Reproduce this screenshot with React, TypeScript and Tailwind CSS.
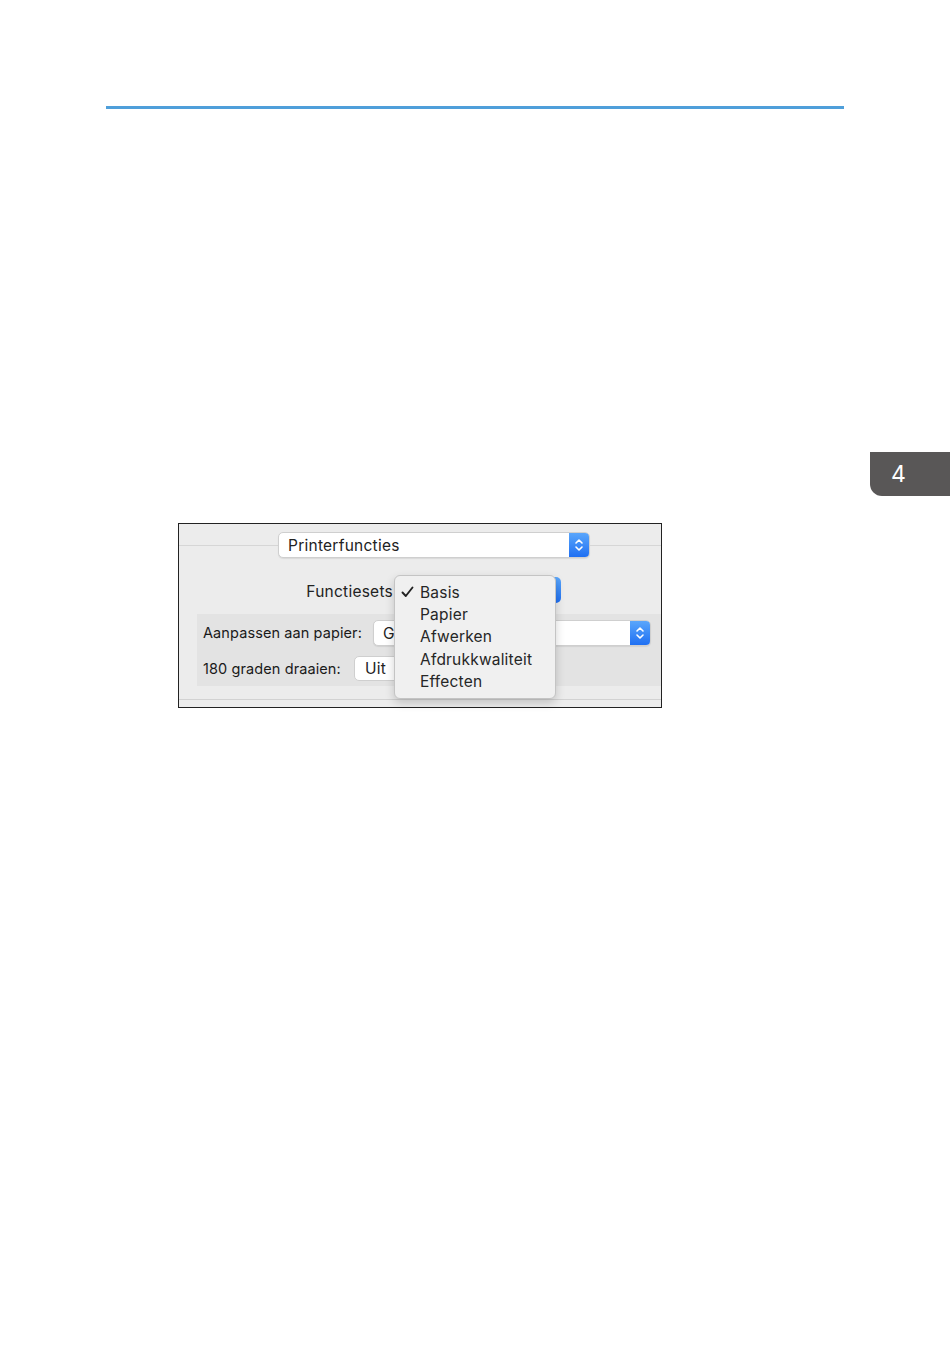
import React from 'react';

const font = { fontFamily: 'Inter, "Noto Sans", "Liberation Sans", sans-serif' };

function Stepper() {
  return (
    <span className="flex h-full w-[20px] items-center justify-center rounded-r-[4px] bg-gradient-to-b from-[#5aa6fb] to-[#1f6ff2]">
      <svg width="10" height="16" viewBox="0 0 10 16" fill="none" stroke="#fff" strokeWidth="1.6" strokeLinecap="round" strokeLinejoin="round">
        <path d="M2 6 L5 3 L8 6" />
        <path d="M2 10 L5 13 L8 10" />
      </svg>
    </span>
  );
}

function PopUp({ label, width }: { label: string; width: string }) {
  return (
    <div className={`flex h-[26px] ${width} items-stretch rounded-[5px] border border-[#cfcfcf] bg-white shadow-[0_1px_1px_rgba(0,0,0,0.08)]`}>
      <span className="flex flex-1 items-center pl-[9px] pt-[2px] text-[15.5px] tracking-[0.25px] text-[#222]">{label}</span>
      <Stepper />
    </div>
  );
}

const items = ['Basis', 'Papier', 'Afwerken', 'Afdrukkwaliteit', 'Effecten'];

export default function App() {
  return (
    <div className="relative h-[1348px] w-[950px] overflow-hidden bg-white" style={font}>
      {/* header rule */}
      <div className="pt-[106px]">
        <div className="ml-[106px] h-[3px] w-[738px] bg-[#4f9fda]" />
      </div>

      {/* chapter tab */}
      <div className="absolute right-0 top-[452px] flex h-[44px] w-[80px] items-center rounded-bl-[12px] bg-[#595757] pl-[21px] text-[23px] text-white">
        4
      </div>

      {/* dialog screenshot */}
      <div className="ml-[178px] mt-[414px] h-[185px] w-[484px] border border-[#222] bg-[#ececec]">
        <div className="relative h-full w-full">
          {/* row 1 */}
          <div className="flex items-center pt-[8px]">
            <div className="h-px w-[99px] bg-[#d6d6d6]" />
            <PopUp label="Printerfuncties" width="w-[312px]" />
            <div className="h-px flex-1 bg-[#d6d6d6]" />
          </div>

          {/* row 2 */}
          <div className="mt-[19px] flex h-[26px] items-center">
            <span className="w-[214px] pt-[4px] text-right text-[15.5px] tracking-[0.25px] text-[#222]">Functiesets</span>
            <div className="ml-[5px] h-[26px] w-[163px] rounded-[5px] bg-gradient-to-b from-[#5aa6fb] to-[#1f6ff2]" />
          </div>

          {/* grey panel */}
          <div className="ml-[18px] mt-[11px] flex h-[72px] flex-col gap-[10px] bg-[#e3e3e3] pl-[6px] pt-[6px]">
            <div className="flex items-center">
              <span className="w-[170px] text-[14.5px] tracking-[0.1px] text-[#1a1a1a]">Aanpassen aan papier:</span>
              <PopUp label="G" width="w-[278px]" />
            </div>
            <div className="flex items-center">
              <span className="w-[151px] text-[14.5px] tracking-[0.1px] text-[#1a1a1a]">180 graden draaien:</span>
              <div className="flex h-[25px] w-[60px] items-center rounded-[5px] border border-[#cfcfcf] bg-white pl-[10px] text-[15.5px] tracking-[0.25px] text-[#222]">
                Uit
              </div>
            </div>
          </div>

          <div className="mt-[13px] h-px w-full bg-[#d2d2d2]" />

          {/* open menu */}
          <div className="absolute left-[215px] top-[51px] w-[162px] rounded-[6px] border border-[#c4c4c4] bg-[#f0f0f0] py-[5px] shadow-[0_4px_10px_rgba(0,0,0,0.18)]">
            {items.map((it, i) => (
              <div key={it} className="flex h-[22.4px] items-center text-[15.5px] tracking-[0.2px] text-[#262626]">
                <span className="flex w-[25px] items-center pl-[6px]">
                  {i === 0 && (
                    <svg width="13" height="12" viewBox="0 0 13 12" fill="none" stroke="#222" strokeWidth="1.9" strokeLinecap="round" strokeLinejoin="round">
                      <path d="M1.5 6.5 L4.8 10 L11.5 1.5" />
                    </svg>
                  )}
                </span>
                <span>{it}</span>
              </div>
            ))}
          </div>
        </div>
      </div>
    </div>
  );
}
